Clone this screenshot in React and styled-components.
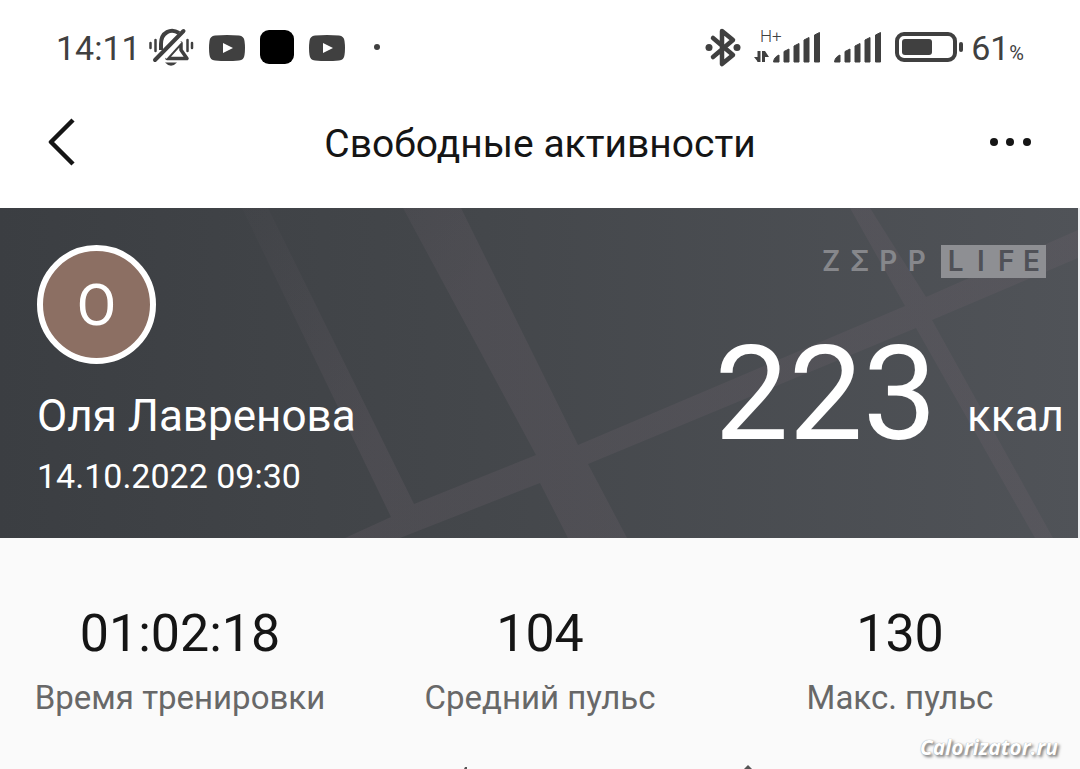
import React from "react";
import styled, { createGlobalStyle } from "styled-components";

const GlobalStyle = createGlobalStyle`
  body {
    margin: 0;
    background: #fafafa;
    color: #151515;
    font-family: Roboto, "Noto Sans", sans-serif;
  }
`;

const Page = styled.div`
  min-height: 100vh;
  display: flex;
  flex-direction: column;
  overflow: hidden;
`;

const Top = styled.div`
  background: #fff;
`;

const StatusBar = styled.div`
  display: flex;
  align-items: center;
  justify-content: space-between;
  height: 96px;
  padding: 0 56px;
  box-sizing: border-box;
  color: #404040;
  font-size: 34px;
`;

const StatusGroup = styled.div`
  display: flex;
  align-items: center;
  gap: ${props => props.$gap}px;
`;

const Percent = styled.small`
  font-size: 20px;
`;

const NavBar = styled.header`
  display: grid;
  grid-template-columns: 140px 1fr 140px;
  align-items: center;
  height: 112px;
  padding-bottom: 20px;
  box-sizing: border-box;
`;

const IconButton = styled.button`
  display: flex;
  justify-content: ${props => props.$align};
  padding: 0 48px;
  border: 0;
  background: none;
  color: #151515;
`;

const Title = styled.h1`
  margin: 0;
  padding-top: 4px;
  text-align: center;
  font-size: 39px;
  font-weight: 400;
  line-height: 48px;
`;

const Hero = styled.section`
  position: relative;
  display: flex;
  justify-content: space-between;
  height: 330px;
  box-sizing: border-box;
  padding: 37px 14px 0 37px;
  border-right: 2px solid #eceef0;
  background: linear-gradient(90deg, #3b3e42, #44474b 45%, #505358);
  color: #fff;
`;

const Roads = styled.svg`
  position: absolute;
  inset: 0;
  width: 100%;
  height: 100%;
`;

const Person = styled.div`
  position: relative;
`;

const Avatar = styled.div`
  display: flex;
  align-items: center;
  justify-content: center;
  width: 119px;
  height: 119px;
  box-sizing: border-box;
  border: 6px solid #fff;
  border-radius: 50%;
  background: #8c6f63;
  font-size: 58px;
`;

const Name = styled.div`
  margin-top: 24px;
  font-size: 44px;
  line-height: 56px;
`;

const DateText = styled.time`
  display: block;
  margin-top: 12px;
  font-size: 34px;
  line-height: 40px;
`;

const Energy = styled.div`
  position: relative;
  display: flex;
  flex-direction: column;
  align-items: flex-end;
`;

const Logo = styled.div`
  display: flex;
  gap: 8px;
  margin-right: 18px;
  font-family: Inter, sans-serif;
  font-size: 28px;
  font-weight: 600;
  line-height: 33px;
`;

const LogoWord = styled.span`
  display: grid;
  grid-template-columns: repeat(4, 1fr);
  box-sizing: border-box;
  width: ${props => (props.$filled ? 105 : 118)}px;
  padding: 0 2px;
  text-align: center;
  background: ${props => (props.$filled ? "#8e8f93" : "none")};
  color: ${props => (props.$filled ? "#505157" : "#86878b")};
`;

const Calories = styled.div`
  display: flex;
  align-items: flex-end;
  gap: 30px;
  margin-top: 38px;
  font-size: 132px;
  line-height: 156px;
`;

const Unit = styled.span`
  padding-bottom: 30px;
  font-size: 44px;
  line-height: 52px;
`;

const Stats = styled.dl`
  display: grid;
  grid-template-columns: repeat(3, 1fr);
  margin: 0;
  padding-top: 66px;
  text-align: center;
`;

const Stat = styled.div`
  display: flex;
  flex-direction: column-reverse;
`;

const StatLabel = styled.dt`
  margin-top: 14px;
  color: #686868;
  font-size: 33px;
  line-height: 40px;
`;

const StatValue = styled.dd`
  margin: 0;
  font-size: 52px;
  line-height: 60px;
`;

const Footer = styled.footer`
  margin-top: auto;
`;

const Credit = styled.div`
  padding: 0 22px 4px;
  color: #fff;
  text-align: right;
  font-family: "Open Sans", sans-serif;
  font-size: 21px;
  font-style: italic;
  font-weight: 700;
  line-height: 28px;
  text-shadow: 0 0 1px #888, 2px 2px 3px #777;
`;

const NextSection = styled.svg`
  display: block;
  width: 100%;
  height: 4px;
  color: #555;
`;

const stats = [
  { label: "Время тренировки", value: "01:02:18" },
  { label: "Средний пульс", value: "104" },
  { label: "Макс. пульс", value: "130" },
];

function MutedBell() {
  return (
    <svg width="45" height="40" viewBox="0 0 45 40" fill="none" stroke="currentColor" strokeWidth="3" strokeLinecap="round">
      <path d="M12 22V16C12 4 22 0 30 5" strokeWidth="4" strokeLinecap="butt" />
      <path d="M32 15V22L38 30.500H18L32 15Z" fill="#fff" strokeWidth="3.500" strokeLinejoin="round" />
      <path d="M31 13L16 29.500" stroke="#fff" strokeWidth="4" strokeLinecap="butt" />
      <path d="M34.500 3L6 32" strokeWidth="4" />
      <path d="M1.500 15V20M6.500 12V23M38.500 12V23M43 15V20" strokeWidth="2.500" />
      <path d="M16 34.500H28Q22 41 16 34.500Z" fill="currentColor" stroke="none" />
    </svg>
  );
}

function VideoBadge() {
  return (
    <svg width="36" height="26" viewBox="0 0 36 26">
      <path d="M6 .5Q18-.5 30 .5Q35 1 35.500 6Q36.500 13 35.500 20Q35 25 30 25.500Q18 26.500 6 25.500Q1 25 .5 20Q-.5 13 .5 6Q1 1 6 .5Z" fill="currentColor" />
      <path d="M14 8L24 13L14 18Z" fill="#fff" />
    </svg>
  );
}

function Bluetooth() {
  return (
    <svg width="36" height="40" viewBox="0 0 36 40" fill="none" stroke="currentColor" strokeWidth="4.500" strokeLinejoin="round" strokeLinecap="round">
      <path d="M8 10L28 27L17 36V3L28 12L8 29" />
      <circle cx="4" cy="19.500" r="3.500" fill="currentColor" stroke="none" />
      <circle cx="32" cy="19.500" r="3.500" fill="currentColor" stroke="none" />
    </svg>
  );
}

function Bars() {
  return (
    <g fill="currentColor" stroke="currentColor" strokeWidth="1" strokeLinejoin="round">
      <path d="M.5 30Q1 25 6 23V30Z" />
      <path d="M11 19.500L16 17V30H11Z" />
      <path d="M21 14L26 11.500V30H21Z" />
      <path d="M31 8L36 5.500V30H31Z" />
      <path d="M41.500 3L46.500 .5V30H41.500Z" />
    </g>
  );
}

function MobileSignal() {
  return (
    <svg width="67" height="42" viewBox="0 -4 67 42">
      <text x="6" y="11" fontSize="17" fontWeight="300" fill="currentColor">H+</text>
      <path d="M5 20V31M9.500 31V20" fill="none" stroke="currentColor" strokeWidth="3" />
      <path d="M6 31H4L0 26H6ZM9 20H11L15 26H9Z" fill="currentColor" />
      <g transform="translate(19 1)"><Bars /></g>
    </svg>
  );
}

function Signal() {
  return (
    <svg width="48" height="34" viewBox="0 0 48 34">
      <g transform="translate(0 1)"><Bars /></g>
    </svg>
  );
}

function Battery() {
  return (
    <svg width="68" height="32" viewBox="0 0 68 32">
      <rect x="2" y="2" width="58" height="26" rx="7" fill="none" stroke="currentColor" strokeWidth="4" />
      <rect x="7" y="7" width="30" height="16" rx="3" fill="currentColor" />
      <rect x="64" y="10" width="4" height="10" rx="2" fill="currentColor" />
    </svg>
  );
}

function App() {
  return (
    <Page>
      <GlobalStyle />
      <Top>
        <StatusBar>
          <StatusGroup $gap={15}>
            <StatusGroup $gap={8}>
              <span>14:11</span>
              <MutedBell />
            </StatusGroup>
            <StatusGroup $gap={15}>
              <VideoBadge />
              <svg width="34" height="36"><rect width="34" height="34" rx="9" /></svg>
              <VideoBadge />
            </StatusGroup>
            <svg width="34" height="8"><circle cx="17" cy="3" r="3" fill="currentColor" /></svg>
          </StatusGroup>
          <StatusGroup $gap={13}>
            <Bluetooth />
            <MobileSignal />
            <Signal />
            <StatusGroup $gap={8}>
              <Battery />
              <span>61<Percent>%</Percent></span>
            </StatusGroup>
          </StatusGroup>
        </StatusBar>
        <NavBar>
          <IconButton type="button" aria-label="Назад" $align="flex-start">
            <svg width="28" height="48" viewBox="0 0 28 48" fill="none" stroke="currentColor" strokeWidth="4.500">
              <path d="M25 2L3 24L25 46" strokeLinejoin="round" />
            </svg>
          </IconButton>
          <Title>Свободные активности</Title>
          <IconButton type="button" aria-label="Ещё" $align="flex-end">
            <svg width="44" height="10" viewBox="0 0 44 10" fill="currentColor">
              <circle cx="6" cy="5" r="4" />
              <circle cx="22" cy="5" r="4" />
              <circle cx="39" cy="5" r="4" />
            </svg>
          </IconButton>
        </NavBar>
      </Top>
      <Hero>
        <Roads viewBox="0 0 1078 330" preserveAspectRatio="xMidYMid slice" aria-hidden="true">
          <defs>
            <linearGradient id="road" gradientUnits="userSpaceOnUse" x1="240" y1="0" x2="440" y2="130">
              <stop offset="0" stopColor="#6e626c" stopOpacity="0.04" />
              <stop offset="1" stopColor="#6e626c" stopOpacity="0.24" />
            </linearGradient>
          </defs>
          <path d="M242 0H268L414 296L536 247L403 0H461L578 237L905 98L850 0H870L926 89L1078 22V50L932 112L1053 330H1035L916 120L588 256L627 330H568L540 275L400 330H345L391 309Z" fill="url(#road)" />
        </Roads>
        <Person>
          <Avatar>O</Avatar>
          <Name>Оля Лавренова</Name>
          <DateText dateTime="2022-10-14T09:30">14.10.2022 09:30</DateText>
        </Person>
        <Energy>
          <Logo>
            <LogoWord>
              <span>Z</span><span>Σ</span><span>P</span><span>P</span>
            </LogoWord>
            <LogoWord $filled>
              <span>L</span><span>I</span><span>F</span><span>E</span>
            </LogoWord>
          </Logo>
          <Calories>
            <span>223</span>
            <Unit>ккал</Unit>
          </Calories>
        </Energy>
      </Hero>
      <Stats>
        {stats.map(item => (
          <Stat key={item.label}>
            <StatLabel>{item.label}</StatLabel>
            <StatValue>{item.value}</StatValue>
          </Stat>
        ))}
      </Stats>
      <Footer>
        <Credit>Calorizator.ru</Credit>
        <NextSection viewBox="0 0 1080 4" preserveAspectRatio="xMidYMax slice" aria-hidden="true">
          <path d="M464 4L465 2H467V4ZM744 4L748 0L752 4Z" fill="currentColor" />
        </NextSection>
      </Footer>
    </Page>
  );
}

export default App;
